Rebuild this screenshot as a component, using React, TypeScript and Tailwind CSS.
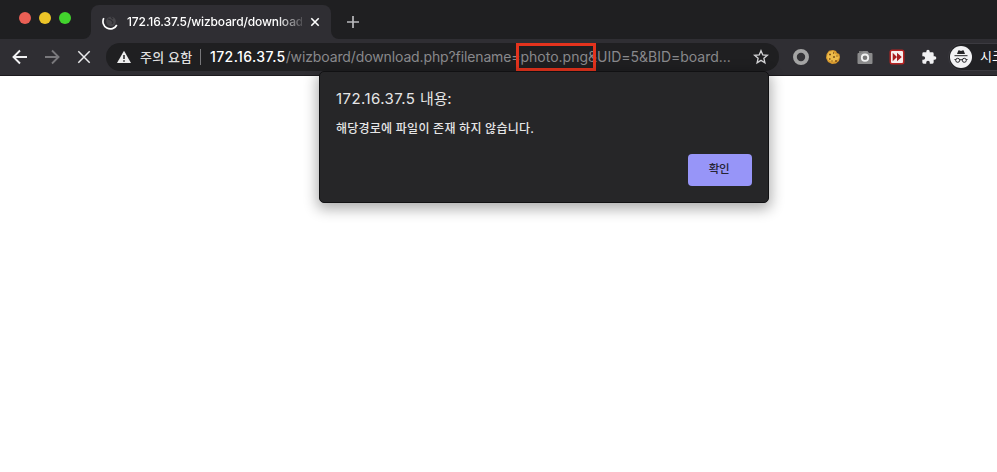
import React from "react";

function TrafficLights() {
  return (
    <div className="flex h-9 w-[91px] shrink-0 items-center gap-2 pl-[19px]">
      <span className="size-3 rounded-full bg-[#ea5f55]" />
      <span className="size-3 rounded-full bg-[#ecc428]" />
      <span className="size-3 rounded-full bg-[#42d32d]" />
    </div>
  );
}

function Tab() {
  return (
    <div className="relative mt-[5px] flex h-[34px] w-60 shrink-0 items-center rounded-t-[8px] bg-[#2f2e33] pl-[11px]">
      <svg className="absolute bottom-0 -left-2 size-2" viewBox="0 0 8 8"><path d="M8 0v8H0a8 8 0 0 0 8-8Z" fill="#2f2e33" /></svg>
      <svg className="absolute -right-2 bottom-0 size-2" viewBox="0 0 8 8"><path d="M0 0v8h8a8 8 0 0 1-8-8Z" fill="#2f2e33" /></svg>
      <svg className="size-[18px] shrink-0" viewBox="0 0 18 18" fill="none">
        <circle cx="9" cy="8.5" r="4.8" fill="#48474b" />
        <path d="M6 6l3 1 2 2-1 2M9 4l2 2" stroke="#2f2e33" strokeWidth="1.1" />
        <path d="M1.8 5.2A7.2 7.2 0 0 0 14.8 12" stroke="#fff" strokeWidth="1.7" />
      </svg>
      <div className="ml-[7px] w-[175px] overflow-hidden text-[12px] leading-4 font-medium tracking-[-0.11px] whitespace-nowrap text-white [mask-image:linear-gradient(to_right,black_150px,transparent_180px)]">
        172.16.37.5/wizboard/download.php
      </div>
      <svg className="ml-[8px] size-[10px] shrink-0" viewBox="0 0 10 10"><path d="m1.3 1.3 7.4 7.4m0-7.4L1.3 8.7" stroke="#fff" strokeWidth="1.6" /></svg>
    </div>
  );
}

function Navigation() {
  return (
    <div className="flex w-[106px] shrink-0 items-center gap-4 pl-3">
      <svg className="size-4" viewBox="0 0 16 16" fill="none"><path d="M15 8H2M8 1.5 1.5 8 8 14.5" stroke="#f1f1f3" strokeWidth="1.9" /></svg>
      <svg className="size-4" viewBox="0 0 16 16" fill="none"><path d="M1 8h13M8 1.5 14.5 8 8 14.5" stroke="#79787c" strokeWidth="1.9" /></svg>
      <svg className="size-4" viewBox="0 0 16 16" fill="none"><path d="m2.3 2.3 11.4 11.4m0-11.4L2.3 13.7" stroke="#ebebed" strokeWidth="1.5" /></svg>
    </div>
  );
}

function AddressBar() {
  return (
    <div className="flex h-7 w-[673px] shrink-0 items-center rounded-full bg-[#1f1f21] pl-[11px]">
      <svg className="size-[14px] shrink-0" viewBox="0 0 14 14"><path d="M7 0.8 14 13H0Z" fill="#eee" /><path d="M7 5v4M7 10.2v1.5" stroke="#1f1f21" strokeWidth="1.5" /></svg>
      <span className="ml-[9px] w-[60px] text-[13px] leading-5 font-medium tracking-[0.2px] whitespace-nowrap text-[#dedede]">주의 요함</span>
      <span className="h-4 w-px bg-[#77777a]" />
      <div className="ml-[9px] w-[530px] text-[14px] leading-5 whitespace-nowrap text-[#89898c]">
        <span className="font-medium tracking-[0.4px] text-white">172.16.37.5</span>
        <span className="tracking-[-0.12px]">/wizboard/download.php?filename=</span>
        <span className="relative">
          photo.png
          <span className="absolute -top-[5px] -left-[4.5px] h-7 w-20 border-3 border-[#e4331d]" />
        </span>
        <span className="tracking-[-0.01px]">&amp;UID=5&amp;BID=board...</span>
      </div>
      <svg className="ml-[13px] size-4 shrink-0" viewBox="0 0 16 16"><path d="m8 1.7 1.8 4.2 4.6.4-3.5 3 1 4.5L8 11.4l-3.9 2.4 1-4.5-3.5-3 4.6-.4Z" fill="none" stroke="#d5d5d7" strokeWidth="1.35" /></svg>
    </div>
  );
}

function Extensions() {
  return (
    <div className="ml-[14px] flex shrink-0 items-center gap-4">
      <svg className="size-4" viewBox="0 0 16 16"><circle cx="8" cy="8" r="6.1" fill="#343337" stroke="#a4a4a4" strokeWidth="3.8" /></svg>
      <svg className="size-4" viewBox="0 0 16 16">
        <path d="M4 1.8 8 1l3 1 1 2 2.3 1L15 8l-1 4-3 2.5-4 .4-4-2L1 9l.6-4Z" fill="#d99a2e" />
        <path d="m4 3 4-1 2 3 3 1 1 3-3 3-4 1-4-2-1-4Z" fill="#eebc4a" />
        <path d="M4 5.5h2M8 4h1M8 8h2M4 10h1.5M11.5 7h1M10 12h2M6.5 12h1" stroke="#805017" strokeWidth="1.6" />
      </svg>
      <svg className="size-4" viewBox="0 0 16 16"><path d="M2 2h3v2H2Z" fill="#777" /><path d="M5.5 2h5L12 4h2.5q1 0 1 1v9q0 1-1 1h-13q-1 0-1-1V5q0-1 1-1H4Z" fill="#8b8b8c" /><circle cx="8" cy="8.7" r="3.2" fill="#777" stroke="#f1f1f1" strokeWidth="1.8" /></svg>
      <svg className="size-4" viewBox="0 0 16 16"><rect x=".5" y=".5" width="15" height="15" rx="2.5" fill="#b82322" /><rect x="2" y="2" width="12" height="12" rx="1" fill="#f8efee" /><path d="m3.7 3.7 4.3 4.3-4.3 4.3Zm4.3 0 4.8 4.3L8 12.3Z" fill="#a91d1e" /></svg>
      <svg className="size-4" viewBox="0 0 24 24"><path d="M20.5 11H19V7a2 2 0 0 0-2-2h-4V3.5a2.5 2.5 0 0 0-5 0V5H4a2 2 0 0 0-2 2v3.8h1.5a2.7 2.7 0 0 1 0 5.4H2V20a2 2 0 0 0 2 2h3.8v-1.5a2.7 2.7 0 0 1 5.4 0V22H17a2 2 0 0 0 2-2v-4h1.5a2.5 2.5 0 0 0 0-5Z" fill="#f0f0f2" /></svg>
    </div>
  );
}

function IncognitoProfile() {
  return (
    <div className="ml-[11px] flex h-7 w-[90px] shrink-0 items-center rounded-full border border-[#3b3a40] bg-[#212124] pl-px">
      <svg className="size-[22px] shrink-0" viewBox="0 0 22 22" fill="none">
        <circle cx="11" cy="11" r="11" fill="#f2f2f4" />
        <path d="m7 8 1.2-3.3q.2-.6.8-.4l2 .6 2-.6q.6-.2.8.4L15 8Z" fill="#242427" />
        <path d="M4.5 9.7h13" stroke="#242427" strokeWidth="1" />
        <g stroke="#242427" strokeWidth="1"><circle cx="7.7" cy="14.3" r="2" /><circle cx="14.3" cy="14.3" r="2" /><path d="M9.6 14q1.4-.8 2.8 0M4.5 13.5h1.3m10.4 0h1.3" /></g>
      </svg>
      <span className="ml-2 text-[13px] whitespace-nowrap text-white">시크릿 모드</span>
    </div>
  );
}

function AlertDialog() {
  return (
    <section className="absolute top-[71px] left-[319px] flex h-[132px] w-[450px] flex-col rounded-[5px] border border-[#111113] bg-[#262628] px-4 pt-[17px] pb-4 text-[#e5e5e6] shadow-[0_4px_14px_2px_rgba(0,0,0,0.32)]">
      <h1 className="text-[15px] leading-5 tracking-[0.42px] whitespace-nowrap">172.16.37.5 <span className="tracking-[-0.1px]">내용:</span></h1>
      <p className="mt-[10px] text-[12px] leading-5 font-medium tracking-[0.24px] whitespace-nowrap">해당경로에 파일이 존재 하지 않습니다.</p>
      <button className="mt-auto h-8 w-16 self-end rounded-[4px] bg-[#9795f8] pr-[2px] text-[11.5px] font-medium tracking-[-0.3px] text-[#252434]">확인</button>
    </section>
  );
}

export default function App() {
  return (
    <main className="relative h-[472px] w-[997px] overflow-hidden bg-white font-[Inter,'Noto_Sans_CJK_KR',sans-serif]">
      <header>
        <div className="flex h-[39px] bg-[#1f1f21]">
          <TrafficLights />
          <Tab />
          <svg className="mt-4 ml-4 size-3" viewBox="0 0 12 12"><path d="M6 0v12M0 6h12" stroke="#b9b9bc" strokeWidth="1.7" /></svg>
        </div>
        <div className="flex h-[37px] items-center overflow-hidden border-b border-[#1c1a1e] bg-[#2f2e33]">
          <Navigation />
          <AddressBar />
          <Extensions />
          <IncognitoProfile />
        </div>
      </header>
      <AlertDialog />
    </main>
  );
}
